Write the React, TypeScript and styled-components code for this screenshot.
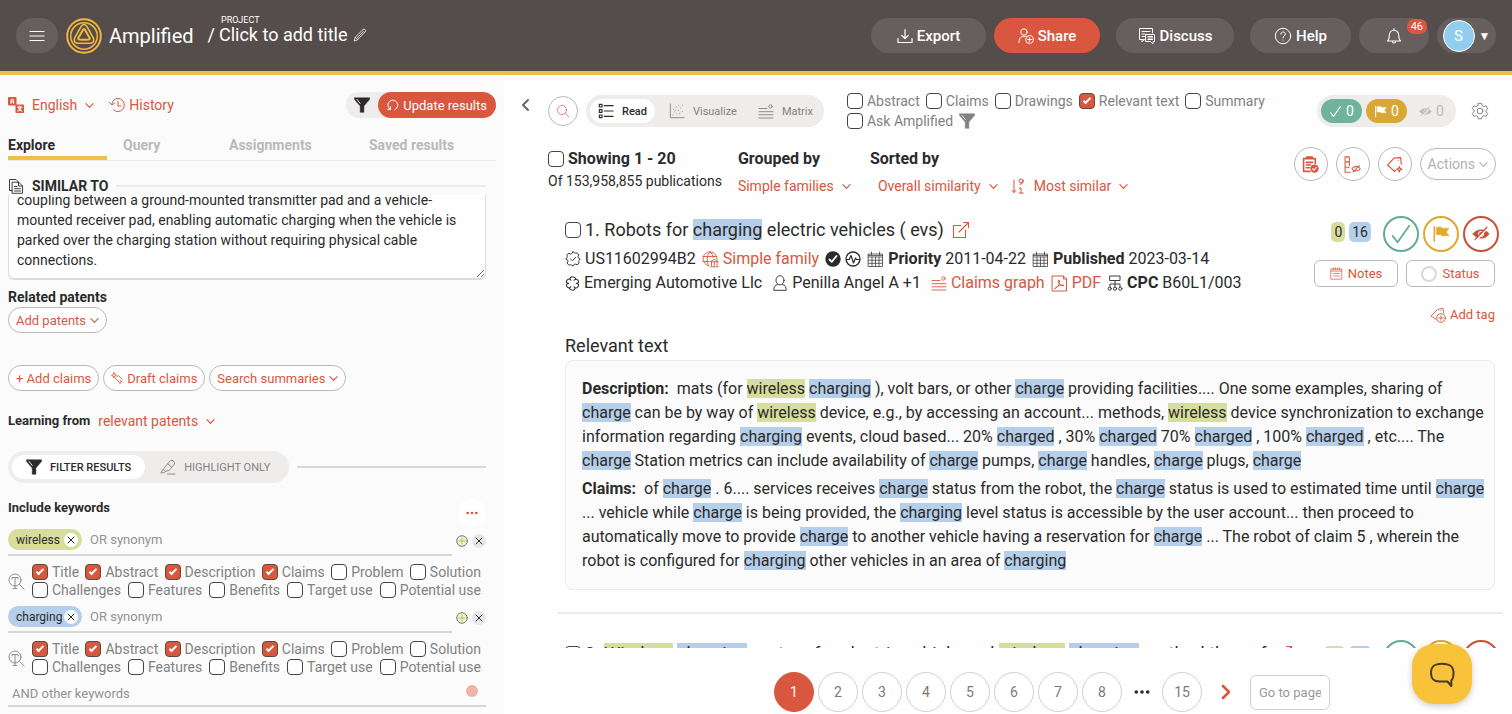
import React from "react";
import styled, { createGlobalStyle } from "styled-components";

const red = "#d9573f";
const ink = "#2b2b2b";
const grey = "#828282";
const yellow = "#efc047";
const blueMark = "#b5cee9";
const greenMark = "#d7dd9c";

const Global = createGlobalStyle`
  * { box-sizing: border-box; }
  html, body { margin: 0; height: 100%; }
  #root { height: 100%; }
  body { font-family: Roboto, "Liberation Sans", sans-serif; color: ${ink}; background: #fefefe; }
  button, input, textarea, select { font: inherit; color: inherit; }
  button { cursor: pointer; padding: 0; border: 0; background: none; }
`;

/* ---------- icons ---------- */

const Svg = styled.svg<{ $size?: number }>`
  width: ${(p) => p.$size ?? 16}px;
  height: ${(p) => p.$size ?? 16}px;
  flex: none;
  display: block;
  fill: none;
  stroke: currentColor;
  stroke-linecap: round;
  stroke-linejoin: round;
`;
type IconProps = { size?: number; children?: React.ReactNode; box?: number; w?: number };
const Icon = ({ size = 16, box = 16, w = 1, children }: IconProps) => (
  <Svg $size={size} viewBox={`0 0 ${box} ${box}`} strokeWidth={w} aria-hidden>
    {children}
  </Svg>
);

const ChevronDown = ({ size = 9 }: { size?: number }) => (
  <Icon size={size} box={10} w={1.3}><path d="M1 3l4 4 4-4" /></Icon>
);
const Funnel = ({ size = 16 }: { size?: number }) => (
  <Icon size={size} w={0.5}>
    <path fill="currentColor" d="M.5.8h15v1.6L9.900 9v6.300H6.200V9L.5 2.400z" />
    <path stroke="#fff" strokeWidth="0.9" d="M3 2.400l3.200 4" />
  </Icon>
);
const Logo = () => (
  <Svg $size={36} viewBox="0 0 36 36" style={{ stroke: "#f3b83c" }} aria-hidden>
    <circle cx="18" cy="18" r="16.800" strokeWidth="1.900" />
    <circle cx="18" cy="18" r="13.300" strokeWidth="1.500" />
    <path strokeWidth="1.600" d="M15.300 8.200q2.700-3.400 5.400 0l6.600 11.600q1.900 4.600-2.800 5.400H11.500q-4.700-.8-2.800-5.400z" />
    <path strokeWidth="2" d="M17.200 11.500q.8-1.100 1.600 0l4.700 8.200q.9 1.600-1 1.900-4.500.5-9 0-1.900-.3-1-1.900z" />
  </Svg>
);
const Menu = () => <Icon size={16} w={1.2}><path d="M1 3.500h14M1 8h14M1 12.500h14" /></Icon>;
const Pencil = () => (
  <Icon size={14} w={0.9}><path d="M1.500 14.500l1-4L11.500 1.700q1.300-.8 2.300.3t.3 2.300L5.300 13.300zM2.500 10.500l2.800 2.800M5 11L12 4" /></Icon>
);
const Download = () => <Icon size={16} w={1.2}><path d="M8 1.500v9M4.800 7.500L8 10.700l3.200-3.200M1 10.500v4h14v-4" /></Icon>;
const ShareUser = () => (
  <Icon size={16} w={1}>
    <circle cx="6" cy="4" r="3.200" /><path d="M1 14.500c0-4 2-6.300 5-6.300q1.500 0 2.500.7" />
    <circle cx="11.500" cy="11.500" r="3.900" /><path d="M11.500 9.500v4M9.500 11.500h4" />
  </Icon>
);
const Discuss = () => (
  <Icon size={18} box={18} w={1}>
    <path d="M4 12.500V15l2.600-2.500M14.500 6V1.500h-13v11h4M4 4.500h8M4 7h3M4 9.500h2.500M8 7.500h8.500v7H15V17l-2.600-2.500H8z" />
    <path d="M10 9.500h4.500M10 11h4.500M10 12.500h4.500" />
  </Icon>
);
const HelpIcon = () => (
  <Icon size={18} box={18} w={1}>
    <circle cx="9" cy="9" r="7.700" /><path d="M6.800 7.200c0-3.200 4.500-2.900 4.500-.2C11.300 8.800 9 8.700 9 10.800M9 12.900v.3" />
  </Icon>
);
const Bell = () => (
  <Icon size={18} box={18} w={1.1}><path d="M2.500 14h13c-1.800-1.500-1.800-3-1.800-5.500 0-3-1.700-5.200-4.700-5.200S4.300 5.500 4.300 8.500c0 2.500 0 4-1.800 5.500zM9 3.300V1.500M7.300 14.300c0 2.300 3.400 2.300 3.400 0" /></Icon>
);
const Translate = () => (
  <Svg $size={16} viewBox="0 0 16 16" aria-hidden>
    <rect x="0" y="0" width="8.500" height="8.500" rx="1" fill={red} stroke="none" />
    <rect x="7.500" y="7.500" width="8.500" height="8.500" rx="1" fill={red} stroke="none" />
    <path stroke="#fff" strokeWidth="1.100" d="M3 6.300V3.200q1.300-2 2.500 0v3.100M3 4.800h2.500M9.600 10h4.400M11.800 9v1M9.800 14q3-1 3.200-4M13.800 14q-3-1-3.200-4" />
  </Svg>
);
const HistoryIcon = () => (
  <Icon size={16} w={1}><path d="M3 6.500C3.800 3.200 6.200 1.500 9 1.500a6.300 6.500 0 0 1 0 13c-2 0-3.500-.7-4.600-1.900M.5 5.500L3 8l2.700-2M9 4.500V9h3.200" /></Icon>
);
const Refresh = () => <Icon size={12} box={12} w={1}><path d="M3 10.300a5 5 0 1 1 5 .4M3.500 7.800v2.700H.8" /></Icon>;
const Docs = () => (
  <Icon size={16} w={0.9}>
    <path d="M4 12.500H1.500v-11H8L10.500 4M4.500 4.200h6.300L14.500 8v7.300h-10zM10.500 4.300V8h4M6.500 8.500H9M6.500 10.700h6M6.500 13h6" />
  </Icon>
);
const Sparkle = () => (
  <Icon size={12} box={12} w={0.9}><path d="M3 .7l.8 1.800 1.800.8-1.800.8L3 6l-.8-1.900-1.700-.8 1.700-.8zM6 5l1.500-1.500 3.800 3.800M4.500 6.500l4 4M9 8l.6 1.200 1.400.6-1.400.6L9 11.600" /></Icon>
);
const Marker = () => (
  <Icon size={16} w={0.9}><path d="M5 8l5.500-6.500q1.500-.8 3 .5t1 3L9 11.500l-3.500.8-2-1.500zM5.500 12.300l-1.500 1.500H.8l2-3M7.500 15H15M8 5l3.500 3" /></Icon>
);
const Cross = () => <Icon size={8} box={8} w={1}><path d="M1 1l6 6M7 1L1 7" /></Icon>;
const SearchText = () => (
  <Icon size={17} box={17} w={0.9}><circle cx="7" cy="7" r="6" /><path d="M11.500 11.500L16 16M4 6V4.500h6V6M7 4.500v11M5 15.500h4" /></Icon>
);
const Target = () => (
  <Svg $size={12} viewBox="0 0 12 12" aria-hidden>
    <circle cx="6" cy="6" r="5.300" stroke="#777" fill="#f0f3cf" strokeWidth="1" />
    <path stroke="#b9bf62" strokeWidth="1" d="M6 3v6M3 6h6" />
  </Svg>
);
const Dots = ({ size = 14 }: { size?: number }) => (
  <Icon size={size} box={14} w={0}><g fill="currentColor"><circle cx="2" cy="7" r="1.600" /><circle cx="7" cy="7" r="1.600" /><circle cx="12" cy="7" r="1.600" /></g></Icon>
);
const ChevronLeft = () => <Icon size={14} box={14} w={2}><path d="M9 2L4 7l5 5" /></Icon>;
const ChevronRight = () => <Icon size={16} w={2.6}><path d="M5 2l6 6-6 6" /></Icon>;
const Search = () => <Icon size={14} box={14} w={0.7}><circle cx="6" cy="6" r="4.500" /><path d="M9.500 9.500L13 13" /></Icon>;
const ListIcon = () => (
  <Icon size={16} box={18} w={1.3}><path d="M1.500 1.500h3v3h-3zM1.500 7.500h3v3h-3zM1.500 13.500h3v3h-3zM7 3h10M7 9h10M7 15h10" /></Icon>
);
const Scatter = () => (
  <Icon size={16} box={18} w={1}><path d="M1.500 1v15.500H17M4.500 13.500h.1M6.500 10h.1M5 7h.1M9 12.500h.1M8 4.500h.1M10.500 8.500h.1M12 12h.1M13 5.500h.1M15 2.500h.1M15 9.500h.1M11 3h.1M7.500 8h.1" /></Icon>
);
const Matrix = () => (
  <Icon size={16} w={0.9}><path d="M1 5.500h8M1 8.700h14M1 11.800h14M1 15h14" /><circle cx="12.500" cy="3.500" r="1.700" /></Icon>
);
const Check = ({ size = 14 }: { size?: number }) => <Icon size={size} w={1.3}><path d="M2 9.500L5.500 14 14 2" /></Icon>;
const Flag = ({ size = 14 }: { size?: number }) => (
  <Icon size={size} w={1.3}><path d="M2 1.500v13" /><path fill="currentColor" strokeWidth="0.6" d="M4 2h4.500v1.200h6.500L12.500 6.200l2.500 3.300H8.500V8.500H4z" /></Icon>
);
const EyeOff = ({ size = 14, back = "#fff" }: { size?: number; back?: string }) => (
  <Icon size={size}>
    <path fill="currentColor" strokeWidth="0.5" d="M.8 8C4 3 12 3 15.200 8 12 13 4 13 .8 8z" />
    <circle cx="8" cy="8" r="2.200" stroke={back} strokeWidth="0.9" />
    <path stroke={back} strokeWidth="1.400" d="M3.700 13.800l10-11" /><path strokeWidth="1.100" d="M2.700 13l10.500-11" />
  </Icon>
);
const Gear = () => (
  <Icon size={18} box={24} w={1.2}>
    <circle cx="12" cy="12" r="3.800" />
    <path d="M9.800 1.800h4.400l.7 3 2.200 1.200 3-1 2.200 3.800-2.300 2.100v2.400l2.300 2.100-2.200 3.800-3-1-2.200 1.200-.7 3H9.800l-.7-3-2.200-1.200-3 1-2.200-3.800L4 13.300v-2.400L1.700 8.800 3.900 5l3 1 2.200-1.200z" />
  </Icon>
);
const SortIcon = () => (
  <Icon size={16} w={1}><path d="M4 2v12.500M2 12.300l2 2.200 2-2.200M13 2.800a2 1.800 0 1 1-4 0 2 1.800 0 0 1 4 0zV4.500q0 1.600-3 1.700M9.500 10.500L11 9.800v5M9.200 15h4" /></Icon>
);
const ClipboardCheck = () => (
  <Icon size={17} w={1.3}>
    <path d="M12.500 7V2.500h-11v12h6M4.300 2.500V1h5.400v1.500zM4 6h6M4 8.500h4M4 11h3" strokeWidth="1.500" />
    <circle cx="11.800" cy="11.800" r="3.900" fill="currentColor" stroke="none" /><path stroke="#fff" strokeWidth="1" d="M10 12l1.300 1.300 2.300-2.700" />
  </Icon>
);
const ColumnsEye = () => (
  <Icon size={17} w={1}><path d="M5 9V.8H1v14.500h5M1 5.500h4M1 10.500h4M7.500 12c2-3 6-3 7.800 0-1.800 2.800-6 2.800-7.800 0zM8.500 15l6-6" /></Icon>
);
const TagSparkle = () => (
  <Icon size={17} w={1.1}><path d="M9 13.600L8 14.500 1.500 8.500 7.500 2l6.300-.5.600 6.300M11.400 4h.1M12.500 10l.7 1.800 1.800.7-1.800.7-.7 1.800-.7-1.800-1.800-.7 1.800-.7z" /></Icon>
);
const External = () => <Icon size={18} box={18} w={1.1}><path d="M9 4.500H1.500v12h12V9M7 11L16.500 1.500M11.500 1.500h5v5" /></Icon>;
const Seal = () => (
  <Icon size={16} w={0.9}><path d="M8 .8q1.200 1.800 2.700 1.300t2.500.7-.1 2.500 2.100 2.700q-1.800 1.200-1.300 2.700t-.7 2.500-2.500 0T8 15.200Q6.800 13.400 5.300 13.900t-2.500-.7.1-2.500T.8 8q1.800-1.200 1.300-2.700t.7-2.500 2.500.1T8 .8zM5.500 8l1.800 1.800L10.700 6.500" /></Icon>
);
const Family = () => (
  <Icon size={17} box={17} w={0.9}>
    <path d="M7 14.800A7 7 0 1 1 15 8M1 5.500h13.500M1 10.500h6M7.800 1C4.500 4 4.500 11 6.500 14.500M8.200 1q2.600 2.300 3 5.500M8.500 10.500l3.800-2.300 3.800 2.300zM9.500 11v3.500M12.300 11v3.500M15 11v3.500M8.500 15.800h7.700" />
  </Icon>
);
const SolidCheck = () => (
  <Icon size={16}><circle cx="8" cy="8" r="7.700" fill="currentColor" stroke="none" /><path stroke="#fff" strokeWidth="1.800" d="M4.500 8.500l2.300 2.300L11.500 5" /></Icon>
);
const Pulse = () => (
  <Icon size={16} w={1.3}><circle cx="8" cy="8" r="7" /><path strokeWidth="1.200" d="M1.500 8.500h2.700L6 4.500l2.500 7.500 2-5 1 1.500h3" /></Icon>
);
const Calendar = () => (
  <Icon size={17} box={17} w={0.7}><path d="M1.500 3h14v12.500h-14zM1.500 6h14M1.500 9.200h14M1.500 12.300h14M5 6v9.500M8.500 6v9.500M12 6v9.500M4.500 1v3M12.500 1v3M1.500 4.500h14" /></Icon>
);
const Org = () => (
  <Icon size={15} w={1.1}><path d="M6.300 4.500Q4.800 2.800 6 1.500t4 0-.3 3M9.700 4.500q2-1.800 3.500-.6t1.300 2.800Q14 7.800 12 8M12 8q2 .2 2.500 1.300t-1.300 2.800-3.500-.6M9.700 11.500q1.500 1.700.3 3t-4 0 .3-3M6.300 11.500q-2 1.800-3.500.6T1.500 9.300Q2 8.200 4 8M4 8Q2 7.800 1.500 6.700t1.300-2.800 3.500.6" /></Icon>
);
const Person = () => (
  <Icon size={16} w={0.9}><ellipse cx="8" cy="5.300" rx="4" ry="4.600" /><path d="M5.500 9.500Q1.500 10.500 1.800 15.300h12.400Q14.500 10.500 10.500 9.500" /></Icon>
);
const Pdf = () => (
  <Icon size={17} box={17} w={1}><path d="M1.500 1h11l3 3v12h-14zM12.500 1v3h3M4 13.500c4-2 5.500-6 4-8.500-1.500 0-1 6 5 5.500-3-1-6.500 0-9 3z" /></Icon>
);
const Tree = () => (
  <Icon size={16} w={0.9}><path d="M3 1h10v4.500H3zM8 5.500V12M3 12V9h10v3" /><circle cx="2.700" cy="13.700" r="1.600" /><circle cx="8" cy="13.700" r="1.600" /><circle cx="13.300" cy="13.700" r="1.600" /></Icon>
);
const Note = () => <Icon size={13} w={0.9}><path d="M1.500 2.500h13v12.500h-13zM1.500 5h13M4 1v2.500M6.700 1v2.500M9.300 1v2.500M12 1v2.500M4.500 8h7M4.500 11h7" /></Icon>;
const TagPlus = () => (
  <Icon size={16} w={0.9}><path d="M6 12.300L1 9 7.500 2.500 13 1.300l.8 5M11 3.500h.1" /><circle cx="11" cy="11" r="4.300" /><path d="M11 8.700v4.600M8.700 11h4.600" /></Icon>
);
const ChatBubble = () => (
  <Svg $size={28} viewBox="0 0 28 28" style={{ stroke: "#4a3823" }} aria-hidden>
    <path strokeWidth="2" d="M19.500 21.500h-8c-5 0-8.500-1.500-8.500-8.500s3.500-9.300 11-9.300S25.500 6 25.500 13c0 3.500-.6 6-2.200 7.500v5.500z" />
  </Svg>
);

/* ---------- shell ---------- */

const Page = styled.div`
  display: flex;
  flex-direction: column;
  height: 100vh;
  min-height: 0;
  overflow: hidden;
`;
const Header = styled.header`
  display: flex;
  align-items: center;
  flex: none;
  height: 75px;
  padding: 0 16px;
  color: #fff;
  background: #554d4b;
  border-bottom: 4px solid ${yellow};
`;
const HeaderButton = styled.button<{ $w: number; $primary?: boolean; $gap?: number }>`
  position: relative;
  display: flex;
  align-items: center;
  justify-content: center;
  gap: 4px;
  width: ${(p) => p.$w}px;
  height: 35px;
  margin-left: ${(p) => p.$gap ?? 8}px;
  border-radius: 18px;
  font-size: 15px;
  font-weight: 500;
  color: #fff;
  background: ${(p) => (p.$primary ? red : "#675f5d")};
`;
const Brand = styled.a`
  display: flex;
  align-items: center;
  gap: 7px;
  margin-left: 8px;
  font-size: 20px;
  color: #fff;
  text-decoration: none;
`;
const Project = styled.div`
  display: grid;
  grid-template-columns: auto auto auto;
  column-gap: 4px;
  margin: 0 auto 11px 14px;
  align-items: center;
`;
const ProjectLabel = styled.span`
  grid-column: 2 / 4;
  padding-left: 2px;
  font-size: 9px;
  line-height: 10px;
`;
const ProjectTitle = styled.span`
  font-size: 18px;
  line-height: 20px;
`;
const PencilButton = styled.button`
  color: #fff;
  margin-left: 1px;
`;
const Count = styled.span`
  position: absolute;
  top: 1px;
  right: 2px;
  padding: 0 4px;
  border-radius: 7px;
  font-size: 11px;
  font-weight: 400;
  line-height: 15px;
  background: ${red};
`;
const Avatar = styled.span`
  display: grid;
  place-items: center;
  width: 32px;
  height: 32px;
  border: 1px solid #fff;
  border-radius: 50%;
  font-weight: 400;
  background: #93cdee;
`;
const Caret = styled.span`
  font-size: 12px;
`;
const Body = styled.div`
  display: flex;
  flex: 1;
  min-height: 0;
`;

/* ---------- shared controls ---------- */

const LinkButton = styled.button<{ $gap?: number }>`
  display: inline-flex;
  align-items: center;
  gap: ${(p) => p.$gap ?? 8}px;
  color: ${red};
  font-size: 14px;
  line-height: 20px;
  white-space: nowrap;
`;
const Pill = styled.button`
  display: inline-flex;
  align-items: center;
  gap: 4px;
  height: 26px;
  padding: 0 7px;
  border: 1px solid #b9b9b9;
  border-radius: 13px;
  background: #fff;
  color: ${red};
  font-size: 13px;
  white-space: nowrap;
`;
const Toggle = styled.div`
  display: inline-flex;
  align-items: center;
  flex: none;
  height: 32px;
  padding: 4px;
  border-radius: 16px;
  background: #efedec;
`;
const ToggleItem = styled.button<{ $active?: boolean; $pad: number }>`
  display: flex;
  align-items: center;
  gap: 8px;
  height: 24px;
  padding: 0 ${(p) => p.$pad}px;
  border-radius: 12px;
  font-size: 11px;
  font-weight: ${(p) => (p.$active ? 500 : 400)};
  color: ${(p) => (p.$active ? ink : "#858281")};
  background: ${(p) => (p.$active ? "#fff" : "transparent")};
  white-space: nowrap;
`;
const Box = styled.input`
  appearance: none;
  width: 16px;
  height: 16px;
  flex: none;
  margin: 0;
  border: 1px solid #444;
  border-radius: 4px;
  background: #fff;
  &:checked {
    border-color: #5b4b3c;
    background: ${red};
    position: relative;
  }
  &:checked::after {
    content: "";
    position: absolute;
    left: 5px;
    top: 2px;
    width: 2px;
    height: 6px;
    border: solid #fff;
    border-width: 0 2px 2px 0;
    transform: rotate(45deg);
  }
`;
const CheckLabel = styled.label`
  display: inline-flex;
  align-items: center;
  gap: 4px;
  font-size: 14px;
  line-height: 18px;
  color: ${grey};
  white-space: nowrap;
`;
const Option = ({ label, on }: { label: string; on?: boolean }) => (
  <CheckLabel>
    <Box type="checkbox" defaultChecked={on} />
    {label}
  </CheckLabel>
);
const Spacer = styled.div<{ $h: number }>`
  height: ${(p) => p.$h}px;
`;

/* ---------- sidebar ---------- */

const Sidebar = styled.aside`
  display: flex;
  flex-direction: column;
  flex: none;
  width: 504px;
  padding: 17px 8px 0;
  background: #fbfbfb;
`;
const SideTop = styled.div`
  display: flex;
  align-items: center;
  gap: 15px;
`;
const UpdateGroup = styled.div`
  display: flex;
  align-items: center;
  gap: 8px;
  margin-left: auto;
  padding-left: 8px;
  border-radius: 13px;
  background: #efedec;
`;
const UpdateButton = styled.button`
  display: flex;
  align-items: center;
  gap: 4px;
  height: 26px;
  padding: 0 9px;
  border-radius: 13px;
  color: #fff;
  background: ${red};
  font-size: 13px;
`;
const Tabs = styled.nav`
  display: flex;
  margin-top: 16px;
  border-bottom: 1px solid #ececec;
`;
const Tab = styled.a<{ $active?: boolean; $w: number }>`
  width: ${(p) => p.$w}px;
  padding: ${(p) => (p.$active ? "0" : "0 16px")};
  border-bottom: 4px solid ${(p) => (p.$active ? yellow : "transparent")};
  font-size: 14px;
  line-height: 22px;
  font-weight: 700;
  color: ${(p) => (p.$active ? ink : "#b9b9b9")};
  text-decoration: none;
  white-space: nowrap;
`;
const SideBody = styled.div`
  width: 478px;
`;
const SectionHead = styled.h2`
  display: flex;
  align-items: center;
  gap: 8px;
  margin: 16px 0 0;
  font-size: 14px;
  line-height: 18px;
  font-weight: 700;
`;
const Rule = styled.span<{ $color?: string }>`
  flex: 1;
  height: 2px;
  background: ${(p) => p.$color ?? "#ececec"};
`;
const TextClip = styled.div`
  display: flex;
  align-items: flex-end;
  height: 85px;
  overflow: hidden;
`;
const QueryText = styled.textarea`
  display: block;
  width: 100%;
  height: 99px;
  padding: 8px;
  border: 1px solid #dcdcdc;
  border-bottom-width: 2px;
  border-radius: 6px;
  background: #fff;
  font-size: 14px;
  line-height: 20px;
  white-space: pre;
  overflow: hidden;
  resize: vertical;
`;
const Label = styled.h3<{ $large?: boolean }>`
  margin: 0;
  font-size: ${(p) => (p.$large ? 14 : 13)}px;
  line-height: 20px;
  font-weight: 700;
`;
const ButtonRow = styled.div`
  display: flex;
  gap: 4px;
  margin: 32px 0 20px;
`;
const Inline = styled.div<{ $gap: number }>`
  display: flex;
  align-items: center;
  gap: ${(p) => p.$gap}px;
`;
const FilterRow = styled.div`
  display: flex;
  align-items: center;
  gap: 8px;
  margin-top: 20px;
`;
const KeywordHead = styled.div`
  display: flex;
  justify-content: space-between;
  margin-top: 15px;
  height: 31px;
`;
const MoreButton = styled.button`
  display: grid;
  place-items: center;
  width: 28px;
  height: 28px;
  margin-top: 1px;
  border-radius: 50%;
  background: #fff;
  color: ${red};
`;
const KeywordRow = styled.div`
  display: flex;
  align-items: flex-start;
  justify-content: space-between;
`;
const KeywordTools = styled.div`
  display: flex;
  align-items: center;
  gap: 4px;
  height: 24px;
`;
const KeywordField = styled.div`
  display: flex;
  align-items: flex-start;
  gap: 8px;
  width: 444px;
  height: 27px;
  border-bottom: 2px solid #d8d6d6;
`;
const Chip = styled.span<{ $bg: string }>`
  display: flex;
  align-items: center;
  justify-content: space-between;
  width: 74px;
  height: 21px;
  padding: 0 4px 0 8px;
  border-radius: 11px;
  font-size: 12px;
  background: ${(p) => p.$bg};
`;
const RoundX = styled.button<{ $bg: string }>`
  display: grid;
  place-items: center;
  width: 14px;
  height: 14px;
  border-radius: 50%;
  background: ${(p) => p.$bg};
`;
const BareInput = styled.input<{ $pad?: number }>`
  flex: 1;
  min-width: 0;
  height: 20px;
  padding: 0 0 0 ${(p) => p.$pad ?? 0}px;
  border: 0;
  outline: 0;
  background: transparent;
  font-size: 13px;
  &::placeholder { color: #929292; opacity: 1; }
`;
const Fields = styled.fieldset`
  display: grid;
  grid-template-columns: 16px 1fr;
  column-gap: 8px;
  align-items: center;
  margin: 7px 0;
  padding: 0;
  border: 0;
  color: ${grey};
`;
const FieldRow = styled.div`
  display: flex;
  justify-content: space-between;
  width: 449px;
`;
const AndRow = styled.div`
  display: flex;
  align-items: flex-start;
  height: 24px;
  padding-right: 8px;
  border-bottom: 2px solid #d8d6d6;
`;
const Dot = styled.span`
  width: 12px;
  height: 12px;
  margin-top: 2px;
  border-radius: 50%;
  background: #efb3a8;
`;

const Keyword = ({ word, bg }: { word: string; bg: string }) => (
  <>
    <KeywordRow>
      <KeywordField>
        <Chip $bg={bg}>
          {word}
          <RoundX $bg="#fff" aria-label={`Remove ${word}`}><Cross /></RoundX>
        </Chip>
        <BareInput placeholder="OR synonym" aria-label="OR synonym" />
      </KeywordField>
      <KeywordTools>
        <Target />
        <RoundX $bg="#e9e7e7" aria-label="Remove row"><Cross /></RoundX>
      </KeywordTools>
    </KeywordRow>
    <Fields>
      <SearchText />
      <div>
        <FieldRow>
          <Option label="Title" on />
          <Option label="Abstract" on />
          <Option label="Description" on />
          <Option label="Claims" on />
          <Option label="Problem" />
          <Option label="Solution" />
        </FieldRow>
        <FieldRow>
          <Option label="Challenges" />
          <Option label="Features" />
          <Option label="Benefits" />
          <Option label="Target use" />
          <Option label="Potential use" />
        </FieldRow>
      </div>
    </Fields>
  </>
);

const queryText =
  "coupling between a ground-mounted transmitter pad and a vehicle-\nmounted receiver pad, enabling automatic charging when the vehicle is\nparked over the charging station without requiring physical cable\nconnections.";

const SidePanel = () => (
  <Sidebar>
    <SideTop>
      <LinkButton $gap={8}><Translate />English<ChevronDown /></LinkButton>
      <LinkButton $gap={4}><HistoryIcon />History</LinkButton>
      <UpdateGroup>
        <Funnel />
        <UpdateButton><Refresh />Update results</UpdateButton>
      </UpdateGroup>
    </SideTop>
    <Tabs>
      <Tab href="#explore" $active $w={99}>Explore</Tab>
      <Tab href="#query" $w={106}>Query</Tab>
      <Tab href="#assignments" $w={140}>Assignments</Tab>
      <Tab href="#saved" $w={143}>Saved results</Tab>
    </Tabs>
    <SideBody>
      <SectionHead><Docs />SIMILAR TO<Rule /></SectionHead>
      <TextClip><QueryText aria-label="Similar to" defaultValue={queryText} /></TextClip>
      <Spacer $h={7} />
      <Label $large>Related patents</Label>
      <Pill>Add patents<ChevronDown /></Pill>
      <ButtonRow>
        <Pill>+ Add claims</Pill>
        <Pill><Sparkle />Draft claims</Pill>
        <Pill>Search summaries<ChevronDown /></Pill>
      </ButtonRow>
      <Inline $gap={8}>
        <Label>Learning from</Label>
        <LinkButton>relevant patents<ChevronDown /></LinkButton>
      </Inline>
      <FilterRow>
        <Toggle>
          <ToggleItem $active $pad={14}><Funnel />FILTER RESULTS</ToggleItem>
          <ToggleItem $pad={15}><Marker />HIGHLIGHT ONLY</ToggleItem>
        </Toggle>
        <Rule $color="#d8d6d6" />
      </FilterRow>
      <KeywordHead>
        <Label>Include keywords</Label>
        <MoreButton aria-label="More"><Dots size={12} /></MoreButton>
      </KeywordHead>
      <Keyword word="wireless" bg={greenMark} />
      <Keyword word="charging" bg={blueMark} />
      <AndRow>
        <BareInput $pad={4} placeholder="AND other keywords" aria-label="AND other keywords" />
        <Dot />
      </AndRow>
    </SideBody>
  </Sidebar>
);

/* ---------- main ---------- */

const Collapse = styled.button`
  align-self: flex-start;
  width: 44px;
  margin-top: 23px;
  display: grid;
  place-items: center;
  color: #666;
`;
const Main = styled.main`
  display: flex;
  flex-direction: column;
  flex: 1;
  min-width: 0;
`;
const TopBar = styled.div`
  display: flex;
  align-items: center;
  padding: 17px 23px 0 0;
`;
const RoundButton = styled.button<{ $size: number }>`
  display: grid;
  place-items: center;
  flex: none;
  width: ${(p) => p.$size}px;
  height: ${(p) => p.$size}px;
  border: 1px solid #b9b9b9;
  border-radius: 50%;
  background: #fff;
  color: ${red};
`;
const ViewToggle = styled(Toggle)`
  margin: 0 23px 0 8px;
`;
const ShowOptions = styled.div`
  display: flex;
  flex-wrap: wrap;
  align-items: center;
  gap: 2px 6px;
  width: 440px;
  margin-right: auto;
  color: ${grey};
`;
const Stats = styled(Toggle)`
  gap: 4px;
`;
const Stat = styled.button<{ $bg?: string }>`
  display: flex;
  align-items: center;
  justify-content: center;
  gap: 4px;
  width: 41px;
  height: 24px;
  border-radius: 12px;
  font-size: 14px;
  color: ${(p) => (p.$bg ? "#fff" : "#bdbbbb")};
  background: ${(p) => p.$bg ?? "transparent"};
`;
const GearButton = styled.button`
  margin-left: 15px;
  color: #777;
`;
const Summary = styled.div`
  display: flex;
  align-items: flex-start;
  gap: 16px;
  padding: 16px 16px 0 0;
`;
const SummaryCol = styled.div<{ $w?: number }>`
  width: ${(p) => (p.$w ? `${p.$w}px` : "auto")};
  white-space: nowrap;
`;
const Strong = styled.div`
  display: flex;
  align-items: center;
  gap: 4px;
  margin-bottom: 4px;
  font-size: 16px;
  line-height: 26px;
  font-weight: 700;
`;
const Small = styled.div`
  margin-top: -4px;
  font-size: 14px;
  line-height: 18px;
`;
const Indent = styled.div`
  padding-left: 8px;
`;
const Actions = styled.div`
  display: flex;
  align-items: center;
  gap: 8px;
  margin: 1px 0 0 auto;
`;
const ActionsButton = styled(Pill)`
  height: 32px;
  border-radius: 16px;
  color: #b3b1b1;
  font-size: 14px;
`;
const Results = styled.div`
  flex: 1;
  min-height: 0;
  margin-top: 4px;
  overflow: hidden;
`;
const Result = styled.article`
  height: 424px;
  padding: 16px 17px 0;
`;
const ResultHead = styled.div`
  display: flex;
  align-items: flex-start;
  justify-content: space-between;
  height: 119px;
`;
const ResultTitle = styled.h2`
  display: flex;
  align-items: center;
  gap: 4px;
  margin: 0 0 3px;
  font-size: 18px;
  line-height: 28px;
  font-weight: 400;
  white-space: pre;
  a { color: ${red}; margin-left: 4px; }
`;
const Mark = styled.mark<{ $green?: boolean }>`
  color: inherit;
  background: ${(p) => (p.$green ? greenMark : blueMark)};
`;
const Meta = styled.div`
  display: flex;
  align-items: center;
  gap: 4px;
  font-size: 16px;
  line-height: 24px;
  white-space: nowrap;
`;
const MetaItem = styled.span<{ $end?: number }>`
  display: inline-flex;
  align-items: center;
  gap: 4px;
  margin-right: ${(p) => p.$end ?? 0}px;
`;
const MetaLink = styled.a<{ $end?: number }>`
  display: inline-flex;
  align-items: center;
  gap: 4px;
  margin-right: ${(p) => p.$end ?? 0}px;
  color: ${red};
  text-decoration: none;
`;
const Side = styled.div`
  display: flex;
  flex-direction: column;
  align-items: flex-end;
`;
const Votes = styled.div`
  display: flex;
  gap: 4px;
  margin: 0 -4px 8px 0;
`;
const Vote = styled.button<{ $c: string }>`
  display: grid;
  place-items: center;
  width: 36px;
  height: 36px;
  border: 2px solid ${(p) => p.$c};
  border-radius: 50%;
  color: ${(p) => p.$c};
  background: #fff;
`;
const Hits = styled.span<{ $bg: string; $last?: boolean }>`
  height: 20px;
  margin: 6px ${(p) => (p.$last ? 8 : 0)}px 0 0;
  padding: 0 3px;
  border-radius: 5px;
  font-size: 14px;
  line-height: 20px;
  background: ${(p) => p.$bg};
`;
const SmallButton = styled.button<{ $w: number }>`
  display: flex;
  align-items: center;
  justify-content: center;
  gap: 5px;
  width: ${(p) => p.$w}px;
  height: 27px;
  border: 1px solid #b9b9b9;
  border-radius: 6px;
  background: #fff;
  color: ${red};
  font-size: 13px;
`;
const Ring = styled.span`
  width: 16px;
  height: 16px;
  border: 2px solid #d9d9d9;
  border-radius: 50%;
`;
const TagButton = styled(LinkButton)`
  margin-top: 18px;
  font-size: 13px;
`;
const SubHead = styled.h3`
  margin: 0 0 3px;
  font-size: 18px;
  line-height: 22px;
  font-weight: 400;
`;
const Passage = styled.div`
  padding: 16px;
  border: 1px solid #ececec;
  border-radius: 8px;
  background: #fbfbfb;
  font-size: 16px;
  line-height: 24px;
  p { margin: 0 0 4px; }
  p:last-child { margin: 0; }
`;
const Line = styled.span`
  display: block;
  white-space: pre;
`;
const Divider = styled.hr`
  height: 2px;
  margin: 22px -8px 0;
  border: 0;
  background: #ececec;
`;
const Pager = styled.nav`
  display: flex;
  align-items: center;
  justify-content: center;
  flex: none;
  gap: 4px;
  height: 66px;
  padding: 22px 0 0 44px;
`;
const PageButton = styled.button<{ $active?: boolean }>`
  width: 40px;
  height: 40px;
  border: 1px solid ${(p) => (p.$active ? red : "#d0d0d0")};
  border-radius: 50%;
  font-size: 14px;
  color: ${(p) => (p.$active ? "#fff" : "#7a7a7a")};
  background: ${(p) => (p.$active ? red : "#fff")};
`;
const PagerGap = styled.span`
  display: grid;
  place-items: center;
  width: 32px;
`;
const NextButton = styled.button`
  display: grid;
  place-items: center;
  width: 32px;
  margin: 0 4px;
  color: ${red};
`;
const PageInput = styled.input`
  width: 80px;
  height: 35px;
  padding: 0 8px;
  border: 1px solid #d0d0d0;
  border-radius: 6px;
  font-size: 13px;
  &::placeholder { color: #9a9a9a; opacity: 1; }
`;
const Chat = styled.button`
  position: fixed;
  right: 40px;
  bottom: 10px;
  display: grid;
  place-items: center;
  width: 60px;
  height: 60px;
  border-radius: 22px;
  background: #f8c23a;
  box-shadow: 0 2px 6px rgba(0, 0, 0, 0.2);
`;

/* Turns "[word]" into a blue highlight and "{word}" into a green one. */
const marked = (text: string) =>
  text.split(/(\[[^\]]+\]|\{[^}]+\})/).map((part, i) => {
    if (part[0] === "[") return <Mark key={i}>{part.slice(1, -1)}</Mark>;
    if (part[0] === "{") return <Mark key={i} $green>{part.slice(1, -1)}</Mark>;
    return part;
  });

const description = [
  "  mats (for {wireless} [charging] ), volt bars, or other [charge] providing facilities.... One some examples, sharing of",
  "[charge] can be by way of {wireless} device, e.g., by accessing an account... methods, {wireless} device synchronization to exchange",
  "information regarding [charging] events, cloud based... 20% [charged] , 30% [charged] 70% [charged] , 100% [charged] , etc.... The",
  "[charge] Station metrics can include availability of [charge] pumps, [charge] handles, [charge] plugs, [charge]",
];
const claims = [
  "  of [charge] . 6.... services receives [charge] status from the robot, the [charge] status is used to estimated time until [charge]",
  "... vehicle while [charge] is being provided, the [charging] level status is accessible by the user account... then proceed to",
  "automatically move to provide [charge] to another vehicle having a reservation for [charge] ... The robot of claim 5 , wherein the",
  "robot is configured for [charging] other vehicles in an area of [charging]",
];

const Text = ({ head, lines }: { head: string; lines: string[] }) => (
  <p>
    {lines.map((line, i) => (
      <Line key={i}>
        {i === 0 && <b>{head}</b>}
        {marked(line)}
      </Line>
    ))}
  </p>
);

const Title = ({ id, title }: { id: string; title: string }) => (
  <ResultTitle>
    <Box type="checkbox" id={id} />
    <label htmlFor={id}>{marked(title)}</label>
    <a href="#open" aria-label="Open patent"><External /></a>
  </ResultTitle>
);

const VoteRow = ({ hits }: { hits: [string, string] }) => (
  <Votes>
    <Hits $bg={greenMark}>{hits[0]}</Hits>
    <Hits $bg={blueMark} $last>{hits[1]}</Hits>
    <Vote $c="#63ab98" aria-label="Relevant"><Check size={22} /></Vote>
    <Vote $c="#dfa92f" aria-label="Flag"><Flag size={18} /></Vote>
    <Vote $c="#c9503b" aria-label="Hide"><EyeOff size={18} /></Vote>
  </Votes>
);

const ResultList = () => (
  <Results>
    <Result>
      <ResultHead>
        <div>
          <Title id="r1" title="1. Robots for [charging] electric vehicles ( evs)" />
          <Meta>
            <MetaItem $end={2}><Seal />US11602994B2</MetaItem>
            <MetaLink href="#family" $end={2}><Family />Simple family</MetaLink>
            <MetaItem $end={2}><SolidCheck /><Pulse /></MetaItem>
            <MetaItem $end={2}><Calendar /><span><b>Priority</b> 2011-04-22</span></MetaItem>
            <MetaItem><Calendar /><span><b>Published</b> 2023-03-14</span></MetaItem>
          </Meta>
          <Meta>
            <MetaItem $end={6}><Org />Emerging Automotive Llc</MetaItem>
            <MetaItem $end={6}><Person />Penilla Angel A +1</MetaItem>
            <MetaLink href="#claims" $end={2}><Matrix />Claims graph</MetaLink>
            <MetaLink href="#pdf" $end={2}><Pdf />PDF</MetaLink>
            <MetaItem><Tree /><span><b>CPC</b> B60L1/003</span></MetaItem>
          </Meta>
        </div>
        <Side>
          <VoteRow hits={["0", "16"]} />
          <Inline $gap={8}>
            <SmallButton $w={84}><Note />Notes</SmallButton>
            <SmallButton $w={89}><Ring />Status</SmallButton>
          </Inline>
          <TagButton $gap={4}><TagPlus />Add tag</TagButton>
        </Side>
      </ResultHead>
      <SubHead>Relevant text</SubHead>
      <Passage>
        <Text head="Description:" lines={description} />
        <Text head="Claims:" lines={claims} />
      </Passage>
      <Divider />
    </Result>
    <Result>
      <ResultHead>
        <Title
          id="r2"
          title="2. {Wireless} [charging] system for electric vehicle and {wireless} [charging] method thereof"
        />
        <Side><VoteRow hits={["10", "16"]} /></Side>
      </ResultHead>
    </Result>
  </Results>
);

export default function App() {
  return (
    <Page>
      <Global />
      <Header>
        <HeaderButton $w={42} $gap={0} aria-label="Menu"><Menu /></HeaderButton>
        <Brand href="#home"><Logo />Amplified</Brand>
        <Project>
          <ProjectLabel>PROJECT</ProjectLabel>
          <ProjectTitle>/</ProjectTitle>
          <ProjectTitle>Click to add title</ProjectTitle>
          <PencilButton aria-label="Edit title"><Pencil /></PencilButton>
        </Project>
        <HeaderButton $w={115}><Download />Export</HeaderButton>
        <HeaderButton $w={106} $primary><ShareUser />Share</HeaderButton>
        <HeaderButton $w={118} $gap={16}><Discuss />Discuss</HeaderButton>
        <HeaderButton $w={101} $gap={16}><HelpIcon />Help</HeaderButton>
        <HeaderButton $w={70} aria-label="Notifications"><Bell /><Count>46</Count></HeaderButton>
        <HeaderButton $w={59} aria-label="Account"><Avatar>S</Avatar><Caret>▼</Caret></HeaderButton>
      </Header>
      <Body>
        <SidePanel />
        <Collapse aria-label="Collapse panel"><ChevronLeft /></Collapse>
        <Main>
          <TopBar>
            <RoundButton $size={30} aria-label="Search"><Search /></RoundButton>
            <ViewToggle>
              <ToggleItem $active $pad={8}><ListIcon />Read</ToggleItem>
              <ToggleItem $pad={14}><Scatter />Visualize</ToggleItem>
              <ToggleItem $pad={7}><Matrix />Matrix</ToggleItem>
            </ViewToggle>
            <ShowOptions>
              <Option label="Abstract" />
              <Option label="Claims" />
              <Option label="Drawings" />
              <Option label="Relevant text" on />
              <Option label="Summary" />
              <Option label="Ask Amplified" />
              <Funnel />
            </ShowOptions>
            <Stats>
              <Stat $bg="#6fb39c"><Check size={13} />0</Stat>
              <Stat $bg="#d9a736"><Flag size={13} />0</Stat>
              <Stat><EyeOff size={13} back="#efedec" />0</Stat>
            </Stats>
            <GearButton aria-label="Settings"><Gear /></GearButton>
          </TopBar>
          <Summary>
            <SummaryCol>
              <Strong as="label"><Box type="checkbox" />Showing 1 - 20</Strong>
              <Small>Of 153,958,855 publications</Small>
            </SummaryCol>
            <SummaryCol $w={116}>
              <Strong>Grouped by</Strong>
              <LinkButton>Simple families<ChevronDown /></LinkButton>
            </SummaryCol>
            <SummaryCol>
              <Strong>Sorted by</Strong>
              <Inline $gap={12}>
                <Indent><LinkButton>Overall similarity<ChevronDown /></LinkButton></Indent>
                <LinkButton><SortIcon />Most similar<ChevronDown /></LinkButton>
              </Inline>
            </SummaryCol>
            <Actions>
              <RoundButton $size={34} aria-label="Clipboard"><ClipboardCheck /></RoundButton>
              <RoundButton $size={34} aria-label="Columns"><ColumnsEye /></RoundButton>
              <RoundButton $size={34} aria-label="Tags"><TagSparkle /></RoundButton>
              <ActionsButton>Actions<ChevronDown /></ActionsButton>
            </Actions>
          </Summary>
          <ResultList />
          <Pager aria-label="Pages">
            {["1", "2", "3", "4", "5", "6", "7", "8"].map((n) => (
              <PageButton key={n} $active={n === "1"}>{n}</PageButton>
            ))}
            <PagerGap><Dots size={16} /></PagerGap>
            <PageButton>15</PageButton>
            <NextButton aria-label="Next page"><ChevronRight /></NextButton>
            <PageInput placeholder="Go to page" aria-label="Go to page" />
          </Pager>
        </Main>
      </Body>
      <Chat aria-label="Open chat"><ChatBubble /></Chat>
    </Page>
  );
}
